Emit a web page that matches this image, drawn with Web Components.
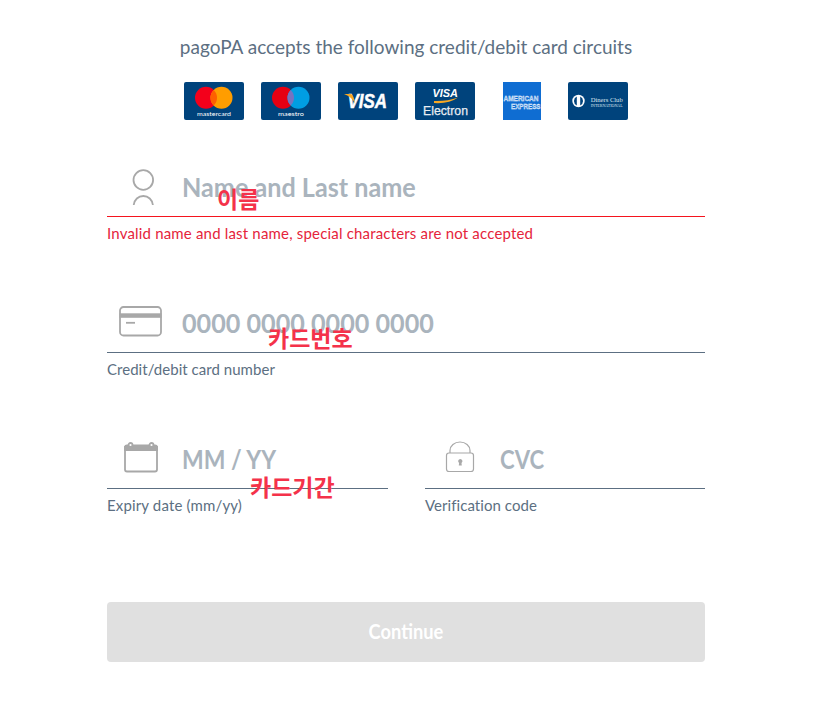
<!DOCTYPE html>
<html lang="en"><head><meta charset="utf-8"><title>pagoPA</title>
<style>html,body{margin:0;background:#fff}body{font-family:Lato,"Noto Sans",sans-serif}</style>
</head><body>
<pay-form>
  <card-logos slot="logos">
    <card-logo kind="mastercard"></card-logo>
    <card-logo kind="maestro"></card-logo>
    <card-logo kind="visa"></card-logo>
    <card-logo kind="electron"></card-logo>
    <card-logo kind="amex"></card-logo>
    <card-logo kind="diners" style="margin-left:-1px"></card-logo>
  </card-logos>
  <pay-field placeholder="Name and Last name" ph-scale=".915" note-spacing=".18" note="Invalid name and last name, special characters are not accepted" error annot="이름" annot-x="110" annot-y="19" icon="user"></pay-field>
  <pay-field placeholder="0000 0000 0000 0000" ph-scale=".915" note-spacing=".04" note="Credit/debit card number" annot="카드번호" annot-x="161" annot-y="22" icon="card"></pay-field>
  <div slot="split">
    <pay-field placeholder="MM / YY" ph-scale=".835" note-spacing=".15" note="Expiry date (mm/yy)" annot="카드기간" annot-x="143" annot-y="35" icon="calendar"></pay-field>
    <pay-field placeholder="CVC" ph-scale=".805" note-spacing=".06" note="Verification code" icon="lock"></pay-field>
  </div>
  <pay-button slot="action">Continue</pay-button>
</pay-form>
<script>
class PayForm extends HTMLElement{constructor(){super();this.attachShadow({mode:'open'}).innerHTML=`<style>
:host{display:block;width:812px;box-sizing:border-box;padding:33px 107px 56px;color:#5c6f82}
h1{margin:0;font:400 19px/27px Lato,"Noto Sans",sans-serif;text-align:center;color:#5c6f82;white-space:nowrap}
.fields{display:flex;flex-direction:column;gap:50px;margin-top:46px}
::slotted([slot=split]){display:grid;grid-template-columns:281fr 280fr;gap:37px}
.action{margin-top:78px}
</style><h1>pagoPA accepts the following credit/debit card circuits</h1><slot name="logos"></slot><div class="fields"><slot></slot><slot name="split"></slot></div><div class="action"><slot name="action"></slot></div>`}}
class CardLogos extends HTMLElement{constructor(){super();this.attachShadow({mode:'open'}).innerHTML=`<style>
:host{display:flex;justify-content:center;gap:17px;margin:22px 0 0}
</style><slot></slot>`}}
const SANS='Liberation Sans,sans-serif';
const LOGOS={
mastercard:`<rect width="60" height="38" rx="2" fill="#00437c"/><circle cx="22" cy="15.700" r="11" fill="#f3001b"/><circle cx="37.500" cy="15.700" r="11" fill="#ff9d00"/><path d="M29.750 7.900a11 11 0 0 1 0 15.600a11 11 0 0 1 0-15.600z" fill="#ff5f00"/><text x="13" y="33.500" font-size="6.500" font-family="Lato,sans-serif" fill="#fff" textLength="34" lengthAdjust="spacingAndGlyphs">mastercard</text>`,
maestro:`<rect width="60" height="38" rx="2" fill="#00437c"/><circle cx="22" cy="15.700" r="11" fill="#e60012"/><circle cx="37.500" cy="15.700" r="11" fill="#009ee3"/><path d="M29.750 7.900a11 11 0 0 1 0 15.600a11 11 0 0 1 0-15.600z" fill="#7673c0"/><text x="17" y="33.500" font-size="6.500" font-family="Lato,sans-serif" fill="#fff" textLength="26" lengthAdjust="spacingAndGlyphs">maestro</text>`,
visa:`<rect width="60" height="38" rx="2" fill="#00437c"/><text x="9.500" y="26" font-size="19.500" font-family="${SANS}" font-weight="700" font-style="italic" fill="#fff" stroke="#fff" stroke-width=".5" textLength="39.500" lengthAdjust="spacingAndGlyphs">VISA</text><path d="M6 12h6.500q2 0 3 3l1.800 7q-3-7-11.300-10z" fill="#f7a823"/>`,
electron:`<rect width="60" height="38" rx="2" fill="#00437c"/><text x="17.500" y="15.300" font-size="11.500" font-family="${SANS}" font-weight="700" font-style="italic" fill="#fff" textLength="25.500" lengthAdjust="spacingAndGlyphs">VISA</text><path d="M19 19q13 .5 24-3.500q-9 6.500-24 5.500z" fill="#f7a823"/><text x="8" y="33" font-size="13.500" font-family="${SANS}" stroke="#e8edf2" stroke-width=".25" fill="#e8edf2" textLength="45" lengthAdjust="spacingAndGlyphs">Electron</text>`,
amex:`<rect x="11" width="38" height="38" fill="#0f6dd2"/><text x="11.500" y="19" font-size="7.800" font-family="${SANS}" font-weight="700" fill="#8fbcec" stroke="#fff" stroke-width=".3" textLength="35" lengthAdjust="spacingAndGlyphs">AMERICAN</text><text x="19" y="27" font-size="7.800" font-family="${SANS}" font-weight="700" fill="#8fbcec" stroke="#fff" stroke-width=".3" textLength="29.500" lengthAdjust="spacingAndGlyphs">EXPRESS</text>`,
diners:`<rect width="60" height="38" rx="2" fill="#00437c"/><circle cx="10.500" cy="19" r="6.200" fill="#fff"/><path d="M8.800 14.500a5 5 0 0 0 0 9z M12.200 14.500a5 5 0 0 1 0 9z" fill="#00437c"/><text x="22.700" y="20" font-size="7" font-family="Liberation Serif,serif" fill="#dfe8f0" textLength="32" lengthAdjust="spacingAndGlyphs">Diners Club</text><text x="22.700" y="24.500" font-size="3.600" font-family="Liberation Serif,serif" fill="#dfe8f0" textLength="32" lengthAdjust="spacingAndGlyphs">INTERNATIONAL</text>`};
class CardLogo extends HTMLElement{constructor(){super();this.attachShadow({mode:'open'})}connectedCallback(){this.shadowRoot.innerHTML=`<style>:host{display:block;width:60px;height:38px}svg{display:block}</style><svg width="60" height="38" viewBox="0 0 60 38">${LOGOS[this.getAttribute('kind')]}</svg>`}}
const ICONS={
user:`<circle cx="36.300" cy="14" r="9.800"/><path d="M26.700 39c.6-5.400 4.600-9 9.600-9s9 3.600 9.600 9"/>`,
card:`<rect x="13" y="5" width="41" height="28.500" rx="3.500"/><rect x="12.500" y="11.300" width="42" height="4.500" fill="#a8a8a8" stroke="none"/><path d="M19 20.800h9"/>`,
calendar:`<path d="M18 9.500q0-2 2-2h28q2 0 2 2v22q0 2-2 2H20q-2 0-2-2z"/><path d="M18 9h32v3H18z" fill="#a8a8a8" stroke="#a8a8a8"/><circle cx="23.500" cy="7" r="2" fill="#fff"/><circle cx="44.500" cy="7" r="2" fill="#fff"/>`,
lock:`<rect x="21.500" y="15" width="27" height="18.500" rx="2.500" stroke-width="1.200"/><path d="M25 15v-2.500a10 8.500 0 0 1 20 0V15" stroke-width="1.200"/><path d="M35.300 21a2.200 2.200 0 0 1 1.200 4l.3 2.400h-3l.3-2.400a2.200 2.200 0 0 1 1.200-4z" fill="#a8a8a8" stroke="none"/>`};
class PayField extends HTMLElement{constructor(){super();this.attachShadow({mode:'open'})}connectedCallback(){
const g=n=>this.getAttribute(n);const err=this.hasAttribute('error');
this.shadowRoot.innerHTML=`<style>
:host{display:block;position:relative;height:86px}
.row{display:flex;align-items:center;height:50px;border-bottom:1px solid ${err?'#f5141e':'#5c6f82'}}
svg{flex:none;display:block;fill:none;stroke:#a8a8a8;stroke-width:1.800}
.ph{display:block;font:700 27.500px/44px Lato,"Noto Sans",sans-serif;color:#aab4bd;white-space:nowrap;padding-bottom:9px;transform-origin:left center;transform:scaleX(${g('ph-scale')})}
.note{font:400 15px/20px Lato,"Noto Sans",sans-serif;letter-spacing:${g('note-spacing')}px;color:${err?'#e5243b':'#5c6f82'};margin-top:6px;white-space:nowrap}
.annot{position:absolute;left:${g('annot-x')}px;top:${g('annot-y')}px;font:700 23px/26px "Noto Sans CJK KR",sans-serif;color:#f4324a;white-space:nowrap}
</style><div class="row"><svg width="75" height="50" viewBox="0 0 75 50" aria-hidden="true">${ICONS[g('icon')]}</svg><span class="ph">${g('placeholder')}</span></div><div class="note">${g('note')}</div>${g('annot')?`<span class="annot">${g('annot')}</span>`:''}`}}
class PayButton extends HTMLElement{constructor(){super();this.attachShadow({mode:'open'}).innerHTML=`<style>
:host{display:flex;align-items:center;justify-content:center;height:60px;border-radius:4px;background:#e0e0e0;color:#fff;font:700 21.500px/1 Lato,"Noto Sans",sans-serif}
span{display:block;transform:scaleX(.85)}
</style><span><slot></slot></span>`}}
customElements.define('pay-form',PayForm);customElements.define('card-logos',CardLogos);customElements.define('card-logo',CardLogo);customElements.define('pay-field',PayField);customElements.define('pay-button',PayButton);
</script>
</body></html>
